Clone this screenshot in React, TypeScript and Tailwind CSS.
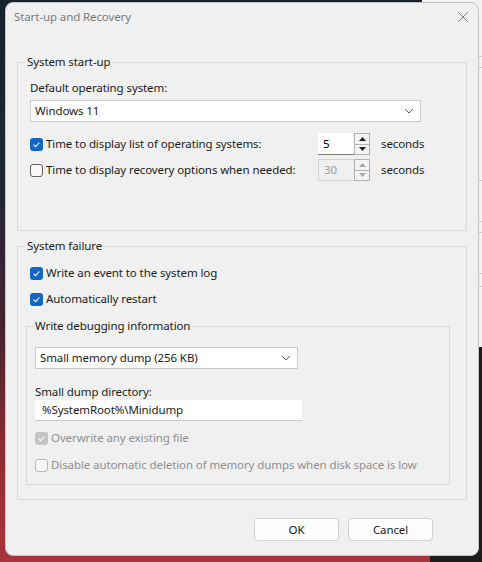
import React from "react";

function Check({ checked, disabled }: { checked?: boolean; disabled?: boolean }) {
  if (checked) {
    return (
      <span
        className={`flex h-[13px] w-[13px] shrink-0 items-center justify-center rounded-[3px] ${
          disabled ? "bg-[#c4c4c4]" : "bg-[#1366c2]"
        }`}
      >
        <svg width="9" height="9" viewBox="0 0 9 9">
          <path d="M1.6 4.7 L3.6 6.6 L7.4 2.5" fill="none" stroke="white" strokeWidth="1.1" />
        </svg>
      </span>
    );
  }
  return (
    <span
      className={`h-[13px] w-[13px] shrink-0 rounded-[3px] border bg-[#f7f7f7] ${
        disabled ? "border-[#b8b8b8]" : "border-[#5e5e5e]"
      }`}
    />
  );
}

function Chevron() {
  return (
    <svg width="10" height="6" viewBox="0 0 10 6">
      <path d="M1 1 L5 5 L9 1" fill="none" stroke="#606060" strokeWidth="1" />
    </svg>
  );
}

function Spinner({ value, disabled }: { value: string; disabled?: boolean }) {
  const tri = disabled ? "#a8a8a8" : "#202020";
  return (
    <div className="flex h-[22px] w-[52px]">
      <div
        className={`flex w-[36px] items-center px-[5px] ${
          disabled
            ? "border border-r-0 border-[#d4d4d4] bg-[#f0f0f0] text-[#9c9c9c]"
            : "border-b border-[#7a7a7a] bg-white text-black"
        }`}
      >
        {value}
      </div>
      <div className="flex w-[16px] flex-col border border-[#b0b0b0] bg-[#f4f4f4]">
        <div className="flex flex-1 items-center justify-center border-b border-[#b0b0b0]">
          <svg width="7" height="4" viewBox="0 0 7 4">
            <path d="M0 4 L3.5 0 L7 4 Z" fill={tri} />
          </svg>
        </div>
        <div className="flex flex-1 items-center justify-center">
          <svg width="7" height="4" viewBox="0 0 7 4">
            <path d="M0 0 L3.5 4 L7 0 Z" fill={tri} />
          </svg>
        </div>
      </div>
    </div>
  );
}

export default function App() {
  return (
    <div className="relative h-[562px] w-[482px] overflow-hidden bg-[linear-gradient(180deg,#16222d_0%,#222634_35%,#4a2430_60%,#8c2c33_80%,#a8363c_100%)] font-['Noto_Sans',sans-serif] text-[11.5px] leading-[16px] tracking-[-0.1px] text-[#1a1a1a]">
      {/* window behind, on the right */}
      <div className="absolute right-0 top-0 flex h-[347px] w-[60px] flex-col bg-[#f3f3f3]">
        <div className="mt-[56px] h-px bg-[#cfcfcf]" />
        <div className="mt-[10px] h-px bg-[#cfcfcf]" />
        <div className="mt-[112px] h-px bg-[#cfcfcf]" />
        <div className="mt-[40px] h-px bg-[#cfcfcf]" />
        <div className="mt-[10px] h-px bg-[#cfcfcf]" />
        <div className="mt-[40px] h-px bg-[#cfcfcf]" />
        <div className="mt-[12px] h-px bg-[#cfcfcf]" />
      </div>
      <div className="absolute bottom-0 right-0 h-[215px] w-[52px] bg-[#1c1c1c]" />

      {/* dialog */}
      <div className="relative z-10 ml-[5px] mt-[2px] flex h-[554px] w-[474px] flex-col rounded-[8px] border border-[#c4c4c4] bg-[#f0f0f0]">
        <div className="flex h-[28px] items-center justify-between pl-[8px] pr-[9px]">
          <span className="text-[#7a7a7a]">Start-up and Recovery</span>
          <svg width="12" height="12" viewBox="0 0 12 12">
            <path d="M1 1 L11 11 M11 1 L1 11" stroke="#808080" strokeWidth="1" />
          </svg>
        </div>

        <div className="flex flex-col px-[11px] pt-[23px]">
          {/* System start-up */}
          <fieldset className="h-[177px] border border-[#d9d9d9] pl-[12px]">
            <legend className="-ml-[5px] px-[2px]">System start-up</legend>
            <div className="mt-[10px]">Default operating system:</div>
            <div className="mt-[4px] flex h-[22px] w-[391px] items-center justify-between border border-[#c9c9c9] bg-white pl-[4px] pr-[6px]">
              <span>Windows 11</span>
              <Chevron />
            </div>
            <div className="mt-[11px] flex h-[22px] items-center">
              <Check checked />
              <span className="ml-[3px] w-[272px]">Time to display list of operating systems:</span>
              <Spinner value="5" />
              <span className="ml-[11px]">seconds</span>
            </div>
            <div className="mt-[4px] flex h-[22px] items-center">
              <Check />
              <span className="ml-[3px] w-[272px]">Time to display recovery options when needed:</span>
              <Spinner value="30" disabled />
              <span className="ml-[11px]">seconds</span>
            </div>
          </fieldset>

          {/* System failure */}
          <fieldset className="mt-[7px] h-[262px] border border-[#d9d9d9] pl-[12px] pr-[16px]">
            <legend className="-ml-[5px] px-[2px]">System failure</legend>
            <div className="mt-[11px] flex items-center gap-[3px]">
              <Check checked />
              <span>Write an event to the system log</span>
            </div>
            <div className="mt-[10px] flex items-center gap-[3px]">
              <Check checked />
              <span>Automatically restart</span>
            </div>

            <fieldset className="-ml-[4px] mt-[11px] h-[167px] border border-[#d9d9d9] pl-[8px]">
              <legend className="-ml-[2px] px-[2px]">Write debugging information</legend>
              <div className="mt-[13px] flex h-[22px] w-[263px] items-center justify-between border border-[#c9c9c9] bg-white pl-[4px] pr-[6px]">
                <span>Small memory dump (256 KB)</span>
                <Chevron />
              </div>
              <div className="mt-[16px] leading-[14px]">Small dump directory:</div>
              <div className="mt-px flex h-[21px] w-[267px] items-center border-b border-[#c9c9c9] bg-white pl-[7px]">
                %SystemRoot%\Minidump
              </div>
              <div className="mt-[9px] flex items-center gap-[3px] text-[#8f8f8f]">
                <Check checked disabled />
                <span>Overwrite any existing file</span>
              </div>
              <div className="mt-[11px] flex items-center gap-[3px] text-[#8f8f8f]">
                <Check disabled />
                <span>Disable automatic deletion of memory dumps when disk space is low</span>
              </div>
            </fieldset>
          </fieldset>
        </div>

        <div className="mt-[18px] flex justify-end gap-[9px] pr-[45px]">
          <button className="h-[23px] w-[85px] rounded-[4px] border border-[#d0d0d0] bg-[#fdfdfd]">OK</button>
          <button className="h-[23px] w-[85px] rounded-[4px] border border-[#d0d0d0] bg-[#fdfdfd]">Cancel</button>
        </div>
      </div>
    </div>
  );
}
